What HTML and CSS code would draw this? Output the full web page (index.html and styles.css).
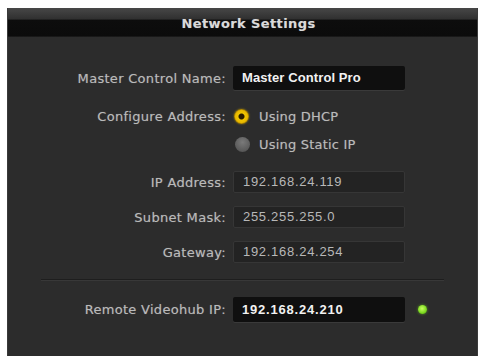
FILE: index.html
```html
<!DOCTYPE html>
<html lang="en">
<head>
    <meta charset="UTF-8">
    <meta name="viewport" content="width=device-width, initial-scale=1.0">
    <title>Network Settings</title>
    <link rel="stylesheet" href="styles.css">
</head>
<body>
    <div class="panel">
        <div class="titlebar">Network Settings</div>
        <div class="form">
            <div class="row row-name">
                <div class="label">Master Control Name:</div>
                <div class="field edit tall">Master Control Pro</div>
            </div>
            <div class="row row-radio1">
                <div class="label">Configure Address:</div>
                <div class="radio">
                    <span class="dot on"></span>
                    <span class="rtext">Using DHCP</span>
                </div>
            </div>
            <div class="row row-radio2">
                <div class="label"></div>
                <div class="radio">
                    <span class="dot off"></span>
                    <span class="rtext">Using Static IP</span>
                </div>
            </div>
            <div class="row row-ip">
                <div class="label">IP Address:</div>
                <div class="field ro">192.168.24.119</div>
            </div>
            <div class="row row-mask">
                <div class="label">Subnet Mask:</div>
                <div class="field ro">255.255.255.0</div>
            </div>
            <div class="row row-gw">
                <div class="label">Gateway:</div>
                <div class="field ro">192.168.24.254</div>
            </div>
            <div class="sep"></div>
            <div class="row row-remote">
                <div class="label">Remote Videohub IP:</div>
                <div class="field edit tall ipval">192.168.24.210</div>
                <span class="led"></span>
            </div>
        </div>
    </div>
</body>
</html>
```

FILE: styles.css
```css
*{
    margin: 0px;
    padding: 0px;
    box-sizing: border-box;
}
body{
    background-color: #fff;
    padding: 8px 3px 0px 7px;
    height: 356px;
    overflow: hidden;
    font-family: "DejaVu Sans", Verdana, sans-serif;
}
.panel{
    background-color: #2c2c2c;
    height: 350px;
    border-left: 1px solid #3a3a3a;
    border-right: 1px solid #3a3a3a;
}
.titlebar{
    height: 29px;
    padding-left: 12px;
    background: linear-gradient(#474747, #303030 38%, #0d0d0d 42%, #0b0b0b 96%, #222 100%);
    color: #dadada;
    font-weight: bold;
    font-size: 13px;
    text-align: center;
    line-height: 31px;
    letter-spacing: 0.4px;
    text-shadow: 0px 0px 1px rgba(255,255,255,.3);
}
.form{
    display: flex;
    flex-direction: column;
}
.row{
    display: flex;
    align-items: center;
}
.label{
    width: 219px;
    text-align: right;
    color: #bababa;
    font-size: 13px;
    letter-spacing: 0.3px;
    padding-right: 1px;
    text-shadow: 0px 0px 1px rgba(200,200,200,.4);
}
.field{
    margin-left: 6px;
    width: 172px;
    height: 22px;
    line-height: 20px;
    padding-left: 9px;
    font-family: "Liberation Sans", Arial, sans-serif;
    font-size: 13px;
    border-radius: 2px;
    letter-spacing: 0.7px;
}
.field.tall{
    height: 24px;
    line-height: 24px;
}
.edit{
    background-color: #0f0f0f;
    color: #f2f2f2;
    font-weight: bold;
    letter-spacing: 0.1px;
    box-shadow: 0px 1px 0px #3a3a3a;
}
.edit.ipval{
    letter-spacing: 0.8px;
}
.ro{
    background-color: #232323;
    border: 1px solid #363636;
    color: #b8b8b8;
}
.row-name{
    margin-top: 29px;
}
.row-radio1{
    margin-top: 16px;
    height: 20px;
}
.row-radio2{
    margin-top: 8px;
    height: 20px;
}
.row-ip{
    margin-top: 17px;
}
.row-mask{
    margin-top: 13px;
}
.row-gw{
    margin-top: 13px;
}
.row-remote{
    margin-top: 16px;
}
.row-remote .field{
    height: 25px;
    line-height: 25px;
}
.radio{
    margin-left: 7px;
    display: flex;
    align-items: center;
}
.dot{
    width: 15px;
    height: 15px;
    border-radius: 50%;
    display: inline-block;
}
.dot.on{
    background: radial-gradient(circle, #2a1c00 0px, #2a1c00 2.5px, #f0c400 3.5px, #e8b800 6px, #9a7400 7.5px);
    box-shadow: 0px 0px 2px rgba(240,200,0,.6);
}
.dot.off{
    background: radial-gradient(circle at 50% 35%, #7a7a7a, #5a5a5a 70%, #444 100%);
    margin-left: 1px;
    margin-right: -1px;
}
.rtext{
    margin-left: 10px;
    color: #bababa;
    font-size: 13px;
    letter-spacing: 0.2px;
    text-shadow: 0px 0px 1px rgba(200,200,200,.4);
}
.sep{
    margin: 16px 33px 0px 33px;
    height: 2px;
    border-top: 1px solid #1e1e1e;
    border-bottom: 1px solid #383838;
}
.led{
    width: 9px;
    height: 9px;
    border-radius: 50%;
    margin-left: 13px;
    background: radial-gradient(circle at 45% 40%, #c8ff60, #7ad81e 60%, #4a9a10 100%);
    box-shadow: 0px 0px 3px rgba(120,220,30,.6);
}
```
